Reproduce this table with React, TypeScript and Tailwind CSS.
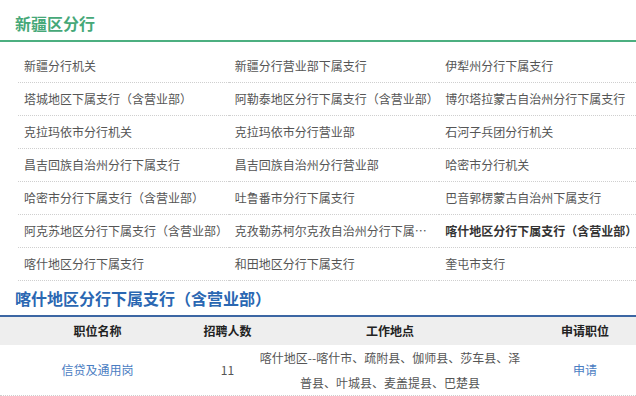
import React from "react";

type Item = { text: string; bold?: boolean; clip?: boolean };

const items: Item[] = [
  { text: "新疆分行机关" },
  { text: "新疆分行营业部下属支行" },
  { text: "伊犁州分行下属支行" },
  { text: "塔城地区下属支行（含营业部）" },
  { text: "阿勒泰地区分行下属支行（含营业部）" },
  { text: "博尔塔拉蒙古自治州分行下属支行" },
  { text: "克拉玛依市分行机关" },
  { text: "克拉玛依市分行营业部" },
  { text: "石河子兵团分行机关" },
  { text: "昌吉回族自治州分行下属支行" },
  { text: "昌吉回族自治州分行营业部" },
  { text: "哈密市分行机关" },
  { text: "哈密市分行下属支行（含营业部）" },
  { text: "吐鲁番市分行下属支行" },
  { text: "巴音郭楞蒙古自治州下属支行" },
  { text: "阿克苏地区分行下属支行（含营业部）" },
  { text: "克孜勒苏柯尔克孜自治州分行下属支行", clip: true },
  { text: "喀什地区分行下属支行（含营业部）", bold: true },
  { text: "喀什地区分行下属支行" },
  { text: "和田地区分行下属支行" },
  { text: "奎屯市支行" },
];

export default function App() {
  return (
    <div className="w-[636px] h-[396px] overflow-hidden bg-white font-['Microsoft_YaHei','Noto_Sans_CJK_SC',sans-serif]">
      <div className="w-[650px]">
        <div className="pt-[13px] pb-[7px] pl-[15px] border-b-2 border-[#4caf80] text-[16px] leading-[20px] font-bold text-[#46a878]">
          新疆区分行
        </div>
        <ul className="mt-[8px] pl-[18px] grid grid-cols-3">
          {items.map((it, i) => (
            <li
              key={i}
              className={
                "h-[33px] border-b border-dotted border-[#cfcfcf] pl-[6px] text-[12px] leading-[32px] whitespace-nowrap overflow-hidden " +
                (it.bold ? "font-bold text-[#333333]" : "text-[#555555]")
              }
            >
              {it.clip ? (
                <span className="block max-w-[203px] truncate">{it.text}</span>
              ) : (
                it.text
              )}
            </li>
          ))}
        </ul>
        <div className="pt-[7px] pb-[7px] pl-[15px] border-b-2 border-[#3c66a3] text-[16px] leading-[20px] font-bold text-[#2a67b2]">
          喀什地区分行下属支行（含营业部）
        </div>
        <div className="grid grid-cols-[195px_65px_260px_130px] h-[28px] bg-[#eeeeee] items-center text-[12px] font-bold text-[#222222] text-center">
          <div>职位名称</div>
          <div>招聘人数</div>
          <div>工作地点</div>
          <div>申请职位</div>
        </div>
        <div className="grid grid-cols-[195px_65px_260px_130px] h-[51px] border-b border-dotted border-[#cfcfcf] items-center text-[12px] text-center text-[#555555]">
          <div className="text-[#4a7dc2]">信贷及通用岗</div>
          <div>11</div>
          <div className="-mx-[2px] leading-[25px]">
            喀什地区--喀什市、疏附县、伽师县、莎车县、泽普县、叶城县、麦盖提县、巴楚县
          </div>
          <div className="text-[#4a7dc2]">申请</div>
        </div>
      </div>
    </div>
  );
}
